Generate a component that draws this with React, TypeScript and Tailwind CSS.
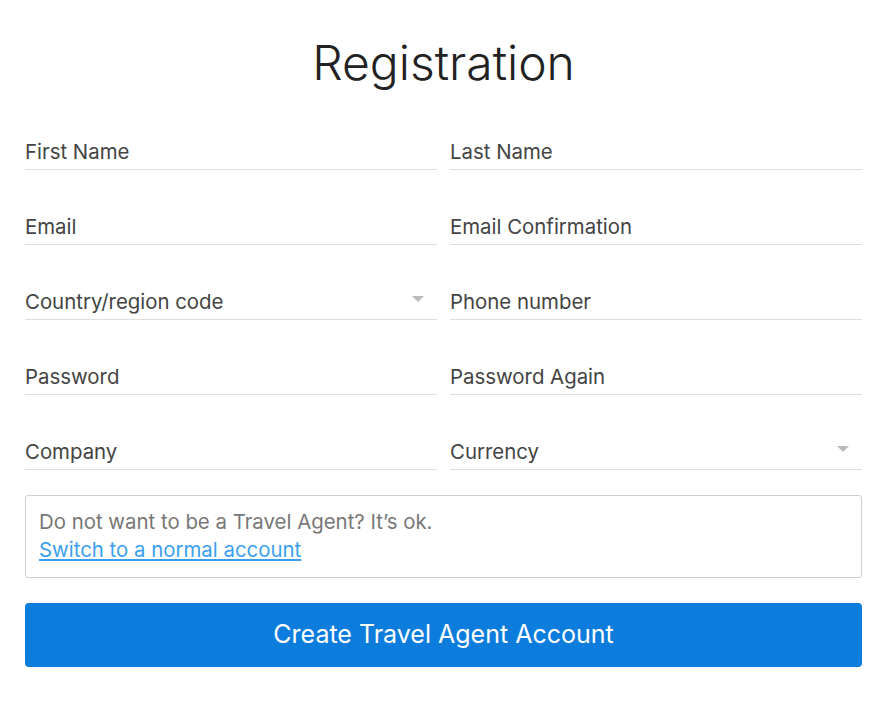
import React from 'react'

const font = { fontFamily: 'Inter, "Noto Sans", "Liberation Sans", sans-serif' }

type Field = { label: string; select?: boolean }

const rows: [Field, Field][] = [
  [{ label: 'First Name' }, { label: 'Last Name' }],
  [{ label: 'Email' }, { label: 'Email Confirmation' }],
  [{ label: 'Country/region code', select: true }, { label: 'Phone number' }],
  [{ label: 'Password' }, { label: 'Password Again' }],
  [{ label: 'Company' }, { label: 'Currency', select: true }],
]

function Input({ field }: { field: Field }) {
  return (
    <div className="relative flex h-[45px] items-end border-b border-[#dedede]">
      <input
        type={field.label.startsWith('Password') ? 'password' : 'text'}
        placeholder={field.label}
        className="w-full bg-transparent pb-[4px] text-[20.4px] leading-[26px] text-[#444] outline-none placeholder:text-[#444]"
        style={font}
      />
      {field.select && (
        <span className="absolute right-[13px] bottom-[17px] h-0 w-0 border-x-[6px] border-t-[6px] border-x-transparent border-t-[#bbb]" />
      )}
    </div>
  )
}

export default function App() {
  return (
    <div className="min-h-screen bg-white" style={font}>
      <div className="ml-[25px] w-[837px] pt-[34px]">
        <h1 className="text-center text-[48px] font-light leading-[58px] text-[#222]">
          Registration
        </h1>

        {/* fields */}
        <div className="mt-[33px] flex flex-col gap-y-[30px]">
          {rows.map(([a, b]) => (
            <div key={a.label} className="grid grid-cols-2 gap-x-[13px]">
              <Input field={a} />
              <Input field={b} />
            </div>
          ))}
        </div>

        {/* switch account */}
        <div className="mt-[25px] rounded-[3px] border border-[#cfcfcf] px-[13px] pt-[12px] pb-[13px] text-[20.4px] leading-[28px]">
          <p className="text-[#777]">Do not want to be a Travel Agent? It’s ok.</p>
          <a href="#" className="text-[#3a9ff0] underline">
            Switch to a normal account
          </a>
        </div>

        <button className="mt-[25px] h-[64px] w-full rounded-[4px] bg-[#0d7ddd] text-[25px] text-white">
          Create Travel Agent Account
        </button>
      </div>
    </div>
  )
}
